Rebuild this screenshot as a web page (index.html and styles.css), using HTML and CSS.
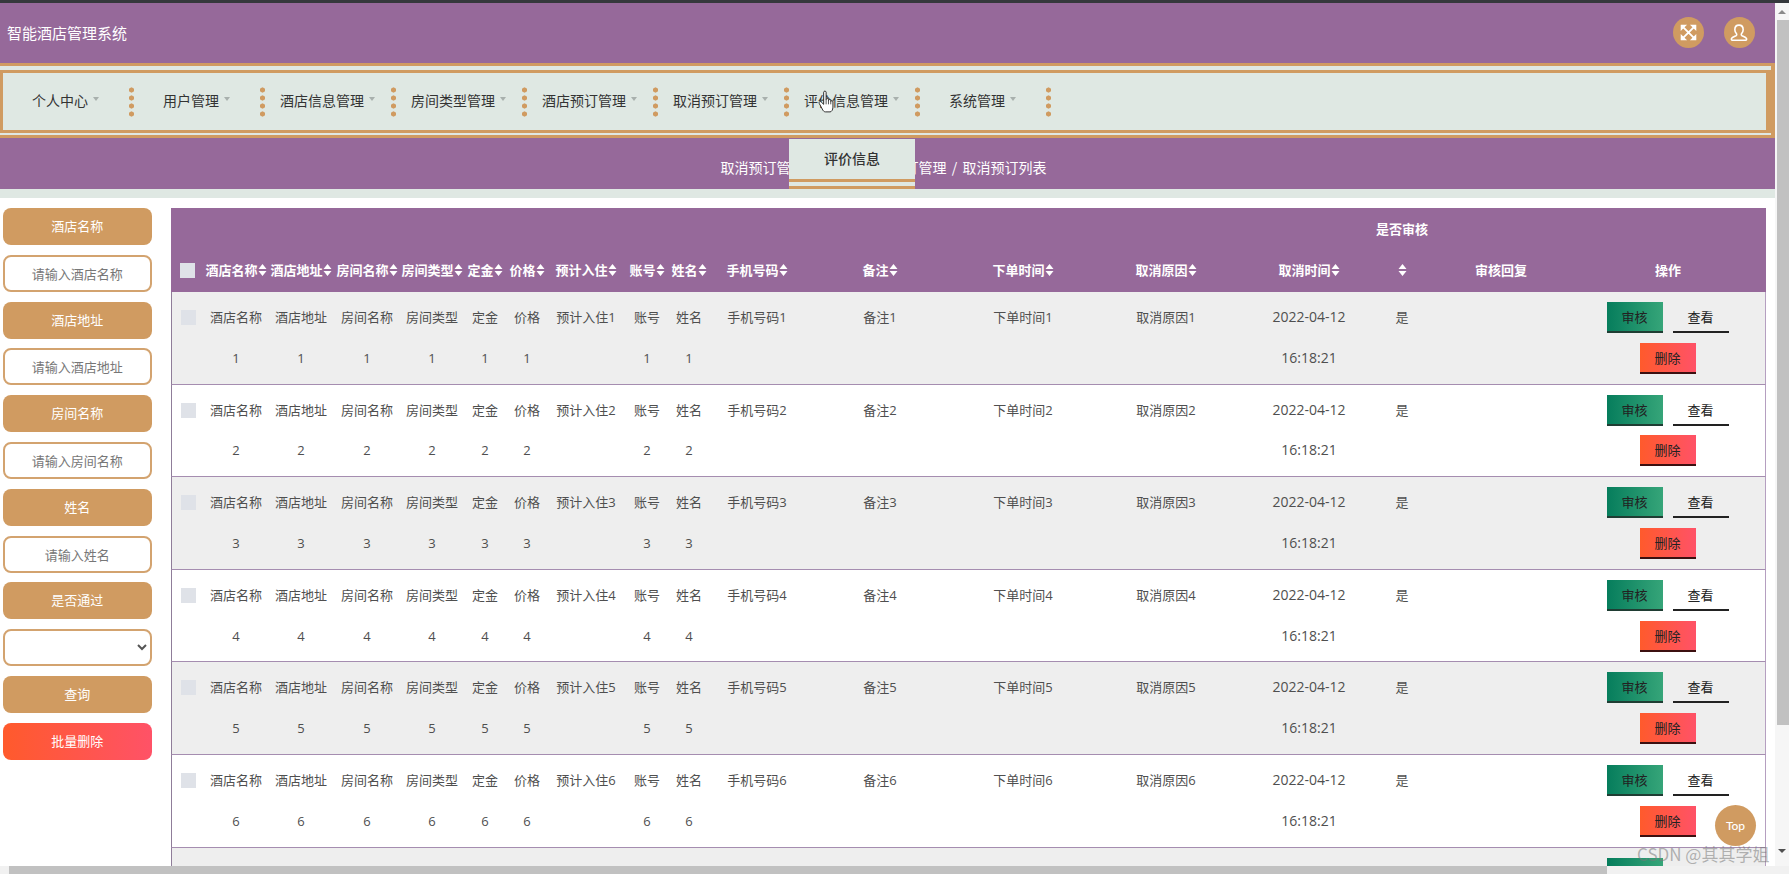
FILE: index.html
```html
<!DOCTYPE html>
<html lang="zh">
<head>
<meta charset="utf-8">
<title>智能酒店管理系统</title>
<link rel="stylesheet" href="styles.css">
</head>
<body>
<div class="top-strip"></div>
<div class="frame">
<div class="page">
  <header class="header">
    <div class="title">智能酒店管理系统</div>
    <div class="header-icons">
      <span class="round"><svg class="ico-expand" viewBox="0 0 24 24"><path d="M4 4l16 16M20 4L4 20" fill="none" stroke="#fff" stroke-width="2.6"/><path d="M1 1h9L1 10zM23 1v9L14 1zM1 23v-9l9 9zM23 23h-9l9-9z" fill="#fff"/></svg></span>
      <span class="round"><svg class="ico-user" viewBox="0 0 24 24"><path d="M12 2.500c-3 0-5 2.300-5 5.500 0 2 1 3.800 2 5 .4.500.4 1.700-.5 2.200-2 .9-5 2-5.500 3.500-.3 1 0 2 1 2h16c1 0 1.300-1 1-2-.5-1.500-3.500-2.600-5.500-3.500-.9-.5-.9-1.700-.5-2.200 1-1.200 2-3 2-5 0-3.200-2-5.500-5-5.500z" fill="none" stroke="#fff" stroke-width="1.900"/></svg></span>
    </div>
  </header>
  <nav class="nav-outer">
    <div class="nav-inner">
      <ul class="nav-list">
        <li class="nav-item">个人中心<i class="caret"></i></li>
        <li class="nav-item">用户管理<i class="caret"></i></li>
        <li class="nav-item">酒店信息管理<i class="caret"></i></li>
        <li class="nav-item">房间类型管理<i class="caret"></i></li>
        <li class="nav-item">酒店预订管理<i class="caret"></i></li>
        <li class="nav-item">取消预订管理<i class="caret"></i></li>
        <li class="nav-item">评价信息管理<i class="caret"></i>
          <div class="dropdown"><div class="dropdown-text">评价信息</div></div>
          <svg class="cursor" viewBox="0 0 18 24"><path d="M6 2.200c0-1.600 2.600-1.600 2.600 0V10c.1-1.500 2.500-1.500 2.500 0v1c.1-1.400 2.400-1.400 2.400 0v1c.2-1.200 2.300-1 2.300.3V18c0 3-1.600 5-3 5H8c-1.500 0-2.500-1-3.500-3l-3.200-6c-.7-1.500 1.200-2.800 2.400-1.200L6 15z" fill="#fff" stroke="#222" stroke-width="1"/><path d="M8.600 10v5M11.100 11v4M13.500 12v3" stroke="#222" stroke-width=".8" fill="none"/></svg>
        </li>
        <li class="nav-item">系统管理<i class="caret"></i></li>
      </ul>
    </div>
  </nav>
  <div class="crumbs"><span>取消预订管理</span><span class="sep">/</span><span>取消预订单预订管理</span><span class="sep">/</span><span>取消预订列表</span></div>
  <div class="strip"></div>
  <main class="main">
    <aside class="side">
      <div class="tag">酒店名称</div>
      <input class="field" placeholder="请输入酒店名称">
      <div class="tag">酒店地址</div>
      <input class="field" placeholder="请输入酒店地址">
      <div class="tag">房间名称</div>
      <input class="field" placeholder="请输入房间名称">
      <div class="tag">姓名</div>
      <input class="field" placeholder="请输入姓名">
      <div class="tag">是否通过</div>
      <select class="field"><option></option><option>是</option><option>否</option></select>
      <div class="tag">查询</div>
      <div class="tag tag-danger">批量删除</div>
    </aside>
    <table class="grid">
      <colgroup>
        <col class="c-check"><col class="c-64"><col class="c-66"><col class="c-66"><col class="c-64"><col class="c-42"><col class="c-42"><col class="c-76"><col class="c-46"><col class="c-38"><col class="c-98"><col class="c-148"><col class="c-138"><col class="c-148"><col class="c-138"><col class="c-48"><col class="c-150"><col class="c-190">
      </colgroup>
      <thead>
        <tr>
          <th><input type="checkbox" class="check"></th>
          <th>酒店名称<svg class="sort" viewBox="0 0 8 12"><path d="M4 0l4 5H0zM0 7h8l-4 5z"/></svg></th>
          <th>酒店地址<svg class="sort" viewBox="0 0 8 12"><path d="M4 0l4 5H0zM0 7h8l-4 5z"/></svg></th>
          <th>房间名称<svg class="sort" viewBox="0 0 8 12"><path d="M4 0l4 5H0zM0 7h8l-4 5z"/></svg></th>
          <th>房间类型<svg class="sort" viewBox="0 0 8 12"><path d="M4 0l4 5H0zM0 7h8l-4 5z"/></svg></th>
          <th>定金<svg class="sort" viewBox="0 0 8 12"><path d="M4 0l4 5H0zM0 7h8l-4 5z"/></svg></th>
          <th>价格<svg class="sort" viewBox="0 0 8 12"><path d="M4 0l4 5H0zM0 7h8l-4 5z"/></svg></th>
          <th>预计入住<svg class="sort" viewBox="0 0 8 12"><path d="M4 0l4 5H0zM0 7h8l-4 5z"/></svg></th>
          <th>账号<svg class="sort" viewBox="0 0 8 12"><path d="M4 0l4 5H0zM0 7h8l-4 5z"/></svg></th>
          <th>姓名<svg class="sort" viewBox="0 0 8 12"><path d="M4 0l4 5H0zM0 7h8l-4 5z"/></svg></th>
          <th>手机号码<svg class="sort" viewBox="0 0 8 12"><path d="M4 0l4 5H0zM0 7h8l-4 5z"/></svg></th>
          <th>备注<svg class="sort" viewBox="0 0 8 12"><path d="M4 0l4 5H0zM0 7h8l-4 5z"/></svg></th>
          <th>下单时间<svg class="sort" viewBox="0 0 8 12"><path d="M4 0l4 5H0zM0 7h8l-4 5z"/></svg></th>
          <th>取消原因<svg class="sort" viewBox="0 0 8 12"><path d="M4 0l4 5H0zM0 7h8l-4 5z"/></svg></th>
          <th>取消时间<svg class="sort" viewBox="0 0 8 12"><path d="M4 0l4 5H0zM0 7h8l-4 5z"/></svg></th>
          <th><span class="th-wide">是否审核</span><svg class="sort" viewBox="0 0 8 12"><path d="M4 0l4 5H0zM0 7h8l-4 5z"/></svg></th>
          <th>审核回复</th>
          <th>操作</th>
        </tr>
      </thead>
      <tbody>
        <tr><td><input type="checkbox" class="check"></td><td>酒店名称<br>1</td><td>酒店地址<br>1</td><td>房间名称<br>1</td><td>房间类型<br>1</td><td>定金<br>1</td><td>价格<br>1</td><td>预计入住1</td><td>账号<br>1</td><td>姓名<br>1</td><td>手机号码1</td><td>备注1</td><td>下单时间1</td><td>取消原因1</td><td class="date">2022-04-12<br>16:18:21</td><td>是</td><td></td><td><a class="btn btn-ok">审核</a><a class="btn btn-view">查看</a><br><a class="btn btn-del">删除</a></td></tr>
        <tr><td><input type="checkbox" class="check"></td><td>酒店名称<br>2</td><td>酒店地址<br>2</td><td>房间名称<br>2</td><td>房间类型<br>2</td><td>定金<br>2</td><td>价格<br>2</td><td>预计入住2</td><td>账号<br>2</td><td>姓名<br>2</td><td>手机号码2</td><td>备注2</td><td>下单时间2</td><td>取消原因2</td><td class="date">2022-04-12<br>16:18:21</td><td>是</td><td></td><td><a class="btn btn-ok">审核</a><a class="btn btn-view">查看</a><br><a class="btn btn-del">删除</a></td></tr>
        <tr><td><input type="checkbox" class="check"></td><td>酒店名称<br>3</td><td>酒店地址<br>3</td><td>房间名称<br>3</td><td>房间类型<br>3</td><td>定金<br>3</td><td>价格<br>3</td><td>预计入住3</td><td>账号<br>3</td><td>姓名<br>3</td><td>手机号码3</td><td>备注3</td><td>下单时间3</td><td>取消原因3</td><td class="date">2022-04-12<br>16:18:21</td><td>是</td><td></td><td><a class="btn btn-ok">审核</a><a class="btn btn-view">查看</a><br><a class="btn btn-del">删除</a></td></tr>
        <tr><td><input type="checkbox" class="check"></td><td>酒店名称<br>4</td><td>酒店地址<br>4</td><td>房间名称<br>4</td><td>房间类型<br>4</td><td>定金<br>4</td><td>价格<br>4</td><td>预计入住4</td><td>账号<br>4</td><td>姓名<br>4</td><td>手机号码4</td><td>备注4</td><td>下单时间4</td><td>取消原因4</td><td class="date">2022-04-12<br>16:18:21</td><td>是</td><td></td><td><a class="btn btn-ok">审核</a><a class="btn btn-view">查看</a><br><a class="btn btn-del">删除</a></td></tr>
        <tr><td><input type="checkbox" class="check"></td><td>酒店名称<br>5</td><td>酒店地址<br>5</td><td>房间名称<br>5</td><td>房间类型<br>5</td><td>定金<br>5</td><td>价格<br>5</td><td>预计入住5</td><td>账号<br>5</td><td>姓名<br>5</td><td>手机号码5</td><td>备注5</td><td>下单时间5</td><td>取消原因5</td><td class="date">2022-04-12<br>16:18:21</td><td>是</td><td></td><td><a class="btn btn-ok">审核</a><a class="btn btn-view">查看</a><br><a class="btn btn-del">删除</a></td></tr>
        <tr><td><input type="checkbox" class="check"></td><td>酒店名称<br>6</td><td>酒店地址<br>6</td><td>房间名称<br>6</td><td>房间类型<br>6</td><td>定金<br>6</td><td>价格<br>6</td><td>预计入住6</td><td>账号<br>6</td><td>姓名<br>6</td><td>手机号码6</td><td>备注6</td><td>下单时间6</td><td>取消原因6</td><td class="date">2022-04-12<br>16:18:21</td><td>是</td><td></td><td><a class="btn btn-ok">审核</a><a class="btn btn-view">查看</a><br><a class="btn btn-del">删除</a></td></tr>
        <tr><td><input type="checkbox" class="check"></td><td>酒店名称<br>7</td><td>酒店地址<br>7</td><td>房间名称<br>7</td><td>房间类型<br>7</td><td>定金<br>7</td><td>价格<br>7</td><td>预计入住7</td><td>账号<br>7</td><td>姓名<br>7</td><td>手机号码7</td><td>备注7</td><td>下单时间7</td><td>取消原因7</td><td class="date">2022-04-12<br>16:18:21</td><td>是</td><td></td><td><a class="btn btn-ok">审核</a><a class="btn btn-view">查看</a><br><a class="btn btn-del">删除</a></td></tr>
      </tbody>
    </table>
  </main>
  <div class="to-top">Top</div>
  <div class="watermark">CSDN @其其学姐</div>
</div>
<div class="vscroll"><i class="arrow-up"></i><div class="vthumb"></div><i class="arrow-down"></i></div>
</div>
<div class="hscroll"><div class="hthumb"></div></div>
</body>
</html>
```

FILE: styles.css
```css
* { box-sizing: border-box; }
html, body { height: 100%; margin: 0; overflow: hidden; }
body {
  display: flex;
  flex-direction: column;
  background: #fff;
  font-family: "Noto Sans CJK SC", "Noto Sans", sans-serif;
  font-size: 13px;
  color: #555;
}
.top-strip { height: 3px; flex: none; background: #35383c; }
.frame { flex: 1; min-height: 0; display: flex; }
.page { position: relative; flex: 1; min-width: 0; overflow: hidden; }

.header {
  height: 60px;
  background: #96699a;
  display: flex;
  align-items: center;
  justify-content: space-between;
  padding: 0 20.5px 1px 7px;
}
.title { color: #fff; font-size: 15px; padding-bottom: 1px; }
.header-icons { display: flex; gap: 20px; }
.round {
  width: 31px;
  height: 31px;
  border-radius: 50%;
  background: #d09b61;
  display: flex;
  align-items: center;
  justify-content: center;
}
.ico-expand { width: 17px; height: 17px; }
.ico-user { width: 20px; height: 20px; }

.nav-outer {
  height: 75px;
  background: #dfe8e3;
  border-top: 3px solid #d09b61;
  border-bottom: 3px solid #d09b61;
  border-right: 4px solid #d09b61;
  padding: 4px 0 2px;
}
.nav-inner {
  height: 63px;
  border-style: solid;
  border-color: #d09b61;
  border-width: 3px 5px 3px 3px;
}
.nav-list {
  list-style: none;
  margin: 0 0 0 -3px;
  padding: 0;
  height: 100%;
  display: flex;
}
.nav-item {
  position: relative;
  width: 131px;
  display: flex;
  align-items: center;
  justify-content: center;
  gap: 5px;
  color: #333;
  font-size: 14px;
  padding-bottom: 3px;
}
.nav-item::after {
  content: "";
  position: absolute;
  right: -2.5px;
  top: calc(50% - 16px);
  width: 5px;
  height: 32px;
  background: radial-gradient(circle at 2.5px 4px, #d09b61 2.3px, transparent 2.8px) repeat-y 0 0 / 5px 8px;
}
.caret {
  width: 0;
  height: 0;
  border-left: 3.5px solid transparent;
  border-right: 3.5px solid transparent;
  border-top: 4px solid #a8b0ad;
  margin-top: -2px;
}
.dropdown {
  position: absolute;
  z-index: 5;
  left: 3px;
  top: 66px;
  width: 126px;
  height: 50px;
  background: #dfe8e3;
  border-bottom: 10px double #d09b61;
}
.dropdown-text {
  text-align: center;
  line-height: 39px;
  font-size: 14px;
  font-weight: 500;
  color: #333;
}
.cursor {
  position: absolute;
  z-index: 6;
  left: 32px;
  top: 17px;
  width: 17px;
  height: 23px;
}

.crumbs {
  height: 51px;
  background: #96699a;
  color: #fff;
  font-size: 14px;
  display: flex;
  align-items: center;
  justify-content: center;
  padding: 7px 8px 0 0;
}
.sep { width: 16px; text-align: center; }
.strip { height: 9px; background: #dfe8e3; }

.main {
  display: flex;
  align-items: flex-start;
  gap: 19px;
  padding: 10px 0 0 2.5px;
}
.side {
  flex: none;
  width: 149.5px;
  display: flex;
  flex-direction: column;
  gap: 9.8px;
}
.tag {
  height: 37px;
  line-height: 35px;
  text-align: center;
  background: #d09b61;
  color: #fff;
  border-radius: 8px;
}
.tag-danger { background: linear-gradient(90deg, #ff5a2c, #ff5267); }
.field {
  height: 37px;
  width: 100%;
  border: 2px solid #d3a36f;
  border-radius: 8px;
  background: #fff;
  text-align: center;
  font: 13px "Noto Sans CJK SC", "Noto Sans", sans-serif;
  color: #555;
  outline: none;
}
.field::placeholder { color: #777; opacity: 1; }

.grid {
  flex: none;
  width: 1595px;
  table-layout: fixed;
  border-collapse: separate;
  border-spacing: 0;
  text-align: center;
}
.c-check { width: 33px; }
.c-64 { width: 64px; }
.c-66 { width: 66px; }
.c-42 { width: 42px; }
.c-76 { width: 76px; }
.c-46 { width: 46px; }
.c-38 { width: 38px; }
.c-98 { width: 98px; }
.c-148 { width: 148px; }
.c-138 { width: 138px; }
.c-48 { width: 48px; }
.c-150 { width: 150px; }
.c-190 { width: 190px; }

.grid th {
  background: #96699a;
  color: #fff;
  font-weight: 700;
  line-height: 41px;
  padding: 0 0 2px;
  height: 84px;
  vertical-align: bottom;
  white-space: nowrap;
}
.th-wide { display: block; margin: 0 -6px; }
.sort { width: 9px; height: 12px; fill: #fff; vertical-align: -1px; }
.grid th:last-child { padding-right: 6px; }
.grid th .check { margin: 14px auto 12px; }

.grid td {
  padding: 5px 0;
  font-family: "Open Sans", "Noto Sans CJK SC", sans-serif;
  line-height: 40.8px;
  vertical-align: top;
  white-space: nowrap;
  color: #4f4f4f;
  border-bottom: 1px solid #a58db0;
}
.grid td.date { font-size: 14px; }
.grid td:first-child { border-left: 1px solid #8f7d99; }
.grid td:last-child { border-right: 1px solid #b59fc0; padding-right: 6px; }
.grid tbody tr:nth-child(odd) td { background: #eeeeee; }

.check {
  appearance: none;
  display: block;
  width: 15px;
  height: 15px;
  margin: 13px auto;
  background: #dfe2e8;
  border: none;
}

.btn {
  display: inline-block;
  width: 56px;
  height: 31px;
  line-height: 31px;
  margin: 5px 5px 4.8px;
  vertical-align: top;
  color: #222;
  text-align: center;
  border-bottom: 2px solid #1f3d33;
}
.btn-ok { background: linear-gradient(90deg, #067d5c, #36a579); }
.btn-view { border-bottom-color: #222; }
.btn-del { background: linear-gradient(90deg, #ff5a2c, #ff5267); border-bottom-color: #3c1010; }

.to-top {
  position: absolute;
  left: 1715px;
  top: 802px;
  width: 41px;
  height: 41px;
  border-radius: 50%;
  background: #d09b61;
  color: #fff;
  text-align: center;
  font: 500 12px/41px "Lato", sans-serif;
}
.watermark {
  position: absolute;
  left: 1637px;
  top: 841px;
  font-size: 17px;
  line-height: 20px;
  color: rgba(120, 120, 120, .55);
  white-space: nowrap;
}

.vscroll {
  flex: none;
  width: 14px;
  background: #f6f6f6;
  display: flex;
  flex-direction: column;
  align-items: flex-end;
  padding-top: 7px;
}
.vthumb { width: 12px; height: 705px; margin-top: 6px; background: #c1c1c1; }
.arrow-up {
  width: 0; height: 0;
  border-left: 4px solid transparent;
  border-right: 4px solid transparent;
  border-bottom: 4px solid #8a8a8a;
  margin-right: 3px;
}
.arrow-down {
  width: 0; height: 0;
  border-left: 4px solid transparent;
  border-right: 4px solid transparent;
  border-top: 4px solid #505050;
  margin: 124px 3px 0 0;
}
.hscroll { flex: none; height: 8px; background: #f1f1f1; padding-left: 9px; }
.hthumb { width: 1598px; height: 100%; background: #c1c1c1; }
```
